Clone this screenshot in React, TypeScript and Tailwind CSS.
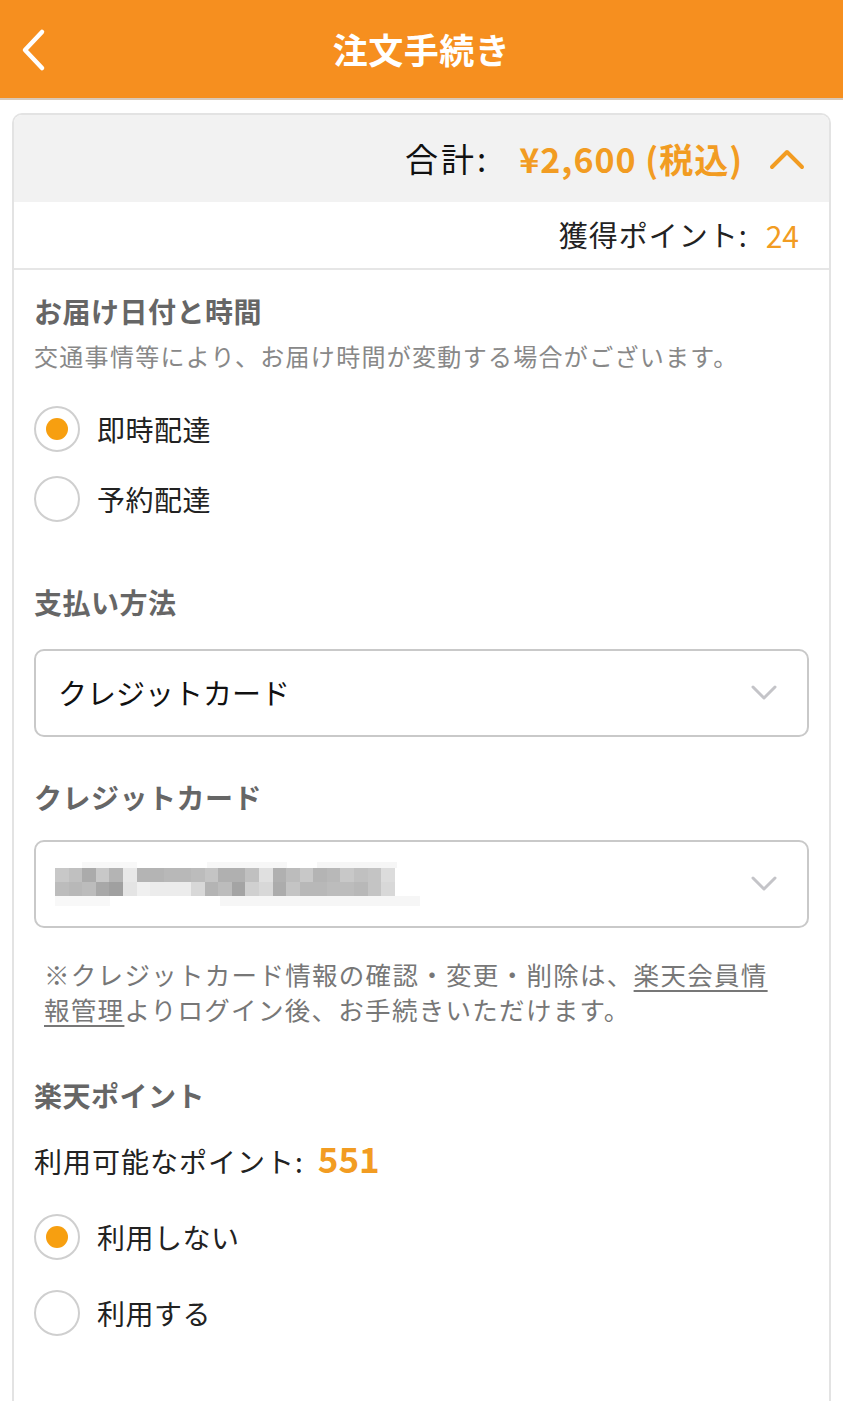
import React from "react";

const font = { fontFamily: '"Noto Sans CJK JP", "Noto Sans", sans-serif' };

function Radio({ checked, label, tall }: { checked?: boolean; label: string; tall?: boolean }) {
  return (
    <div className={`flex items-center ${tall ? "h-[76px]" : "h-[70px]"}`}>
      <div className="w-[46px] h-[46px] rounded-full border-2 border-[#cfcfcf] bg-white flex items-center justify-center shrink-0">
        {checked && <div className="w-[22px] h-[22px] rounded-full bg-[#f79f10]" />}
      </div>
      <span className="ml-[17px] text-[28px] text-[#222] tracking-[0.5px]">{label}</span>
    </div>
  );
}

function ChevronDown() {
  return (
    <svg width="26" height="16" viewBox="0 0 26 16" fill="none">
      <path d="M2 2 L13 13 L24 2" stroke="#c4c4c8" strokeWidth="3" strokeLinecap="round" strokeLinejoin="round" />
    </svg>
  );
}

// pixelated (masked) card number
const row1 = [
  "#c8c8c8", "#c0c0c0", "#ababab", "#c8c8c8", "#b4b4b4", "#e8e8e8", "#b4b4b4", "#b4b4b4", "#b8b8b8", "#b8b8b8",
  "#bcbcbc", "#c4c4c4", "#b0b0b0", "#b0b0b0", "#c0c0c0", "#e0e0e0", "#b0b0b0", "#bcbcbc", "#c8c8c8", "#b4b4b4",
  "#b8b8b8", "#c8c8c8", "#c0c0c0", "#c4c4c4", "#dcdcdc",
];
const row2 = [
  "#bcbcbc", "#b8b8b8", "#bcbcbc", "#a8a8a8", "#a0a0a0", "#e4e4e4", "#f0f0f0", "#ececec", "#ececec", "#ececec",
  "#d8d8d8", "#b4b4b4", "#bcbcbc", "#a4a4a4", "#d0d0d0", "#d8d8d8", "#acacac", "#c4c4c4", "#b8b8b8", "#b8b8b8",
  "#bcbcbc", "#bcbcbc", "#b8b8b8", "#c4c4c4", "#d8d8d8",
];

function Masked() {
  return (
    <div className="flex flex-col">
      <div className="flex h-[6px] ml-[27px]">
        <div className="w-[55px] bg-[#f8f8f8]" />
        <div className="w-[70px]" />
        <div className="w-[80px] bg-[#f7f7f7]" />
        <div className="w-[30px]" />
        <div className="w-[80px] bg-[#f6f6f6]" />
      </div>
      <div className="flex h-[14px]">
        {row1.map((c, i) => (
          <div key={i} className="w-[13.6px]" style={{ background: c }} />
        ))}
      </div>
      <div className="flex h-[14px]">
        {row2.map((c, i) => (
          <div key={i} className="w-[13.6px]" style={{ background: c }} />
        ))}
      </div>
      <div className="flex h-[10px]">
        <div className="w-[55px] bg-[#f8f8f8]" />
        <div className="w-[110px]" />
        <div className="w-[200px] bg-[#f6f6f6]" />
      </div>
    </div>
  );
}

export default function App() {
  return (
    <div className="w-[843px] h-[1401px] overflow-hidden bg-white" style={font}>
      <header className="h-[100px] bg-[#f68f1f] border-b-2 border-[#d8c8b8] flex items-center relative">
        <svg className="absolute left-[18px] top-[28px]" width="30" height="44" viewBox="0 0 30 44" fill="none">
          <path d="M24 4 L7 22 L24 40" stroke="white" strokeWidth="4.5" strokeLinecap="round" strokeLinejoin="round" />
        </svg>
        <h1 className="flex-1 text-center text-white text-[35px] font-bold tracking-[0.5px]">注文手続き</h1>
      </header>

      <div className="mx-[12px] mt-[13px] border-2 border-b-0 border-[#e3e3e3] rounded-t-[10px] overflow-hidden h-[1300px]">
        <div className="bg-[#f2f2f2] h-[87px] flex items-center justify-end pr-[24px]">
          <span className="text-[33px] text-[#111] tracking-[3px]">合計:</span>
          <span className="ml-[30px] text-[34px] font-bold text-[#f29c22] tracking-[1px]">¥2,600 (税込)</span>
          <svg className="ml-[26px]" width="36" height="22" viewBox="0 0 36 22" fill="none">
            <path d="M3 19 L18 4 L33 19" stroke="#f29c22" strokeWidth="4" strokeLinecap="round" strokeLinejoin="round" />
          </svg>
        </div>
        <div className="h-[68px] flex items-center justify-end pr-[30px] border-b-2 border-[#e6e6e6]">
          <span className="text-[29px] text-[#222] tracking-[1px]">獲得ポイント:</span>
          <span className="ml-[18px] text-[30px] text-[#f29c22]">24</span>
        </div>

        <div className="px-[20px]">
          <h2 className="mt-[21px] text-[28px] font-bold text-[#666] leading-[40px] tracking-[0.5px]">お届け日付と時間</h2>
          <p className="mt-[7px] text-[24px] text-[#888] leading-[36px] tracking-[1.3px] whitespace-nowrap">
            交通事情等により、お届け時間が変動する場合がございます。
          </p>
          <div className="mt-[20px]">
            <Radio checked label="即時配達" />
            <Radio label="予約配達" />
          </div>

          <h2 className="mt-[48px] text-[28px] font-bold text-[#666] leading-[40px] tracking-[0.5px]">支払い方法</h2>
          <div className="mt-[27px] h-[88px] border-2 border-[#c9c9c9] rounded-[10px] flex items-center justify-between pl-[22px] pr-[30px]">
            <span className="text-[29px] text-[#111]">クレジットカード</span>
            <ChevronDown />
          </div>

          <h2 className="mt-[40px] text-[28px] font-bold text-[#666] leading-[40px] tracking-[0.5px]">クレジットカード</h2>
          <div className="mt-[23px] h-[88px] border-2 border-[#c9c9c9] rounded-[10px] flex items-center justify-between pl-[19px] pr-[30px]">
            <Masked />
            <ChevronDown />
          </div>

          <p className="mt-[28px] pl-[10px] text-[25.5px] text-[#777] leading-[35px] tracking-[1.3px] whitespace-nowrap">
            ※クレジットカード情報の確認・変更・削除は、
            <span className="underline underline-offset-[5px]">楽天会員情</span>
            <br />
            <span className="underline underline-offset-[5px]">報管理</span>
            よりログイン後、お手続きいただけます。
          </p>

          <h2 className="mt-[49px] text-[28px] font-bold text-[#666] leading-[40px] tracking-[0.5px]">楽天ポイント</h2>
          <div className="mt-[21px] h-[44px] flex items-baseline">
            <span className="text-[28px] text-[#222] leading-[44px] tracking-[1px]">利用可能なポイント:</span>
            <span className="ml-[14px] text-[35px] font-bold text-[#f29c22] leading-[44px]">551</span>
          </div>
          <div className="mt-[19px]">
            <Radio checked tall label="利用しない" />
            <Radio tall label="利用する" />
          </div>
        </div>
      </div>
    </div>
  );
}
